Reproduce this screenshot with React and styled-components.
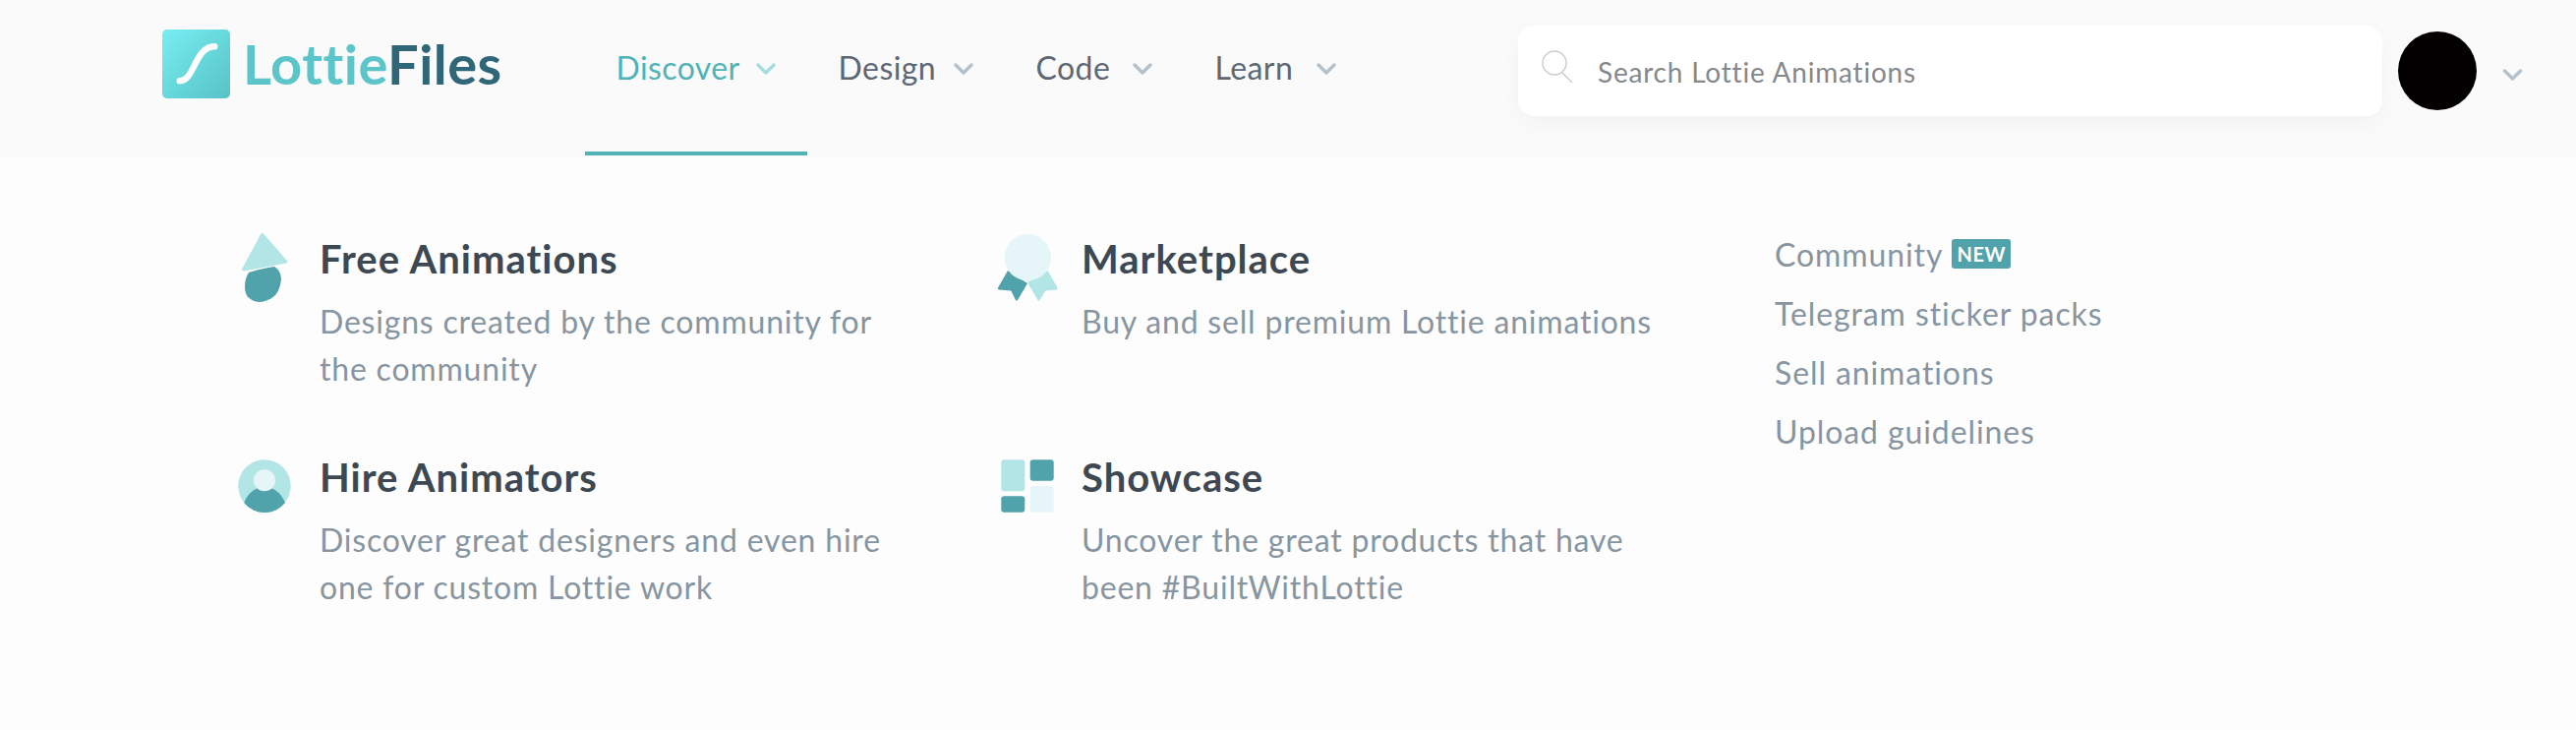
import React from "react";
import styled, { createGlobalStyle } from "styled-components";

const GlobalStyle = createGlobalStyle`
  html, body {
    margin: 0;
    padding: 0;
    background: #fdfdfd;
    overflow: hidden;
  }
`;

const Page = styled.div`
  width: 2620px;
  height: 742px;
  background: #fdfdfd;
  font-family: "Lato", "Open Sans", sans-serif;
`;

// Top bar
const Header = styled.header`
  height: 160px;
  box-sizing: border-box;
  padding: 0 54px 0 165px;
  display: flex;
  align-items: center;
  background: #fafafa;
`;

const Logo = styled.div`
  display: flex;
  align-items: center;
  gap: 13px;
  margin-right: 84px;
  margin-top: -30px;
`;

const LogoMark = styled.svg`
  width: 69px;
  height: 70px;
  display: block;
`;

const LogoText = styled.div`
  font-size: 56px;
  font-weight: 700;
  line-height: 70px;
  letter-spacing: 0.45px;
  color: #5cc5c9;

  span {
    color: #2f6678;
  }
`;

const Nav = styled.nav`
  display: flex;
  height: 100%;
`;

const NavItem = styled.a`
  width: ${(p) => p.$width}px;
  height: 100%;
  box-sizing: border-box;
  padding: 0 32px 24px;
  display: flex;
  align-items: center;
  justify-content: space-between;
  font-size: 32px;
  letter-spacing: 0.4px;
  color: ${(p) => (p.$active ? "#50b3b8" : "#5d6874")};
  position: relative;

  &::after {
    content: "";
    display: ${(p) => (p.$active ? "block" : "none")};
    position: absolute;
    left: 0;
    right: 0;
    bottom: 2px;
    height: 4px;
    background: #54b2b6;
  }
`;

const Chevron = styled.svg`
  width: ${(p) => p.$w || 20}px;
  height: 12px;
  display: block;
  flex: none;
  margin-top: 4px;
  stroke: ${(p) => p.$color || "#b4c0ca"};
  fill: none;
  stroke-width: 3.4;
  stroke-linecap: round;
  stroke-linejoin: round;
`;

const Search = styled.div`
  margin-left: auto;
  width: 879px;
  height: 92px;
  box-sizing: border-box;
  padding: 0 24px;
  display: flex;
  align-items: center;
  gap: 25px;
  background: #fff;
  border-radius: 16px;
  box-shadow: 0 8px 24px rgba(0, 0, 0, 0.035);
  margin-top: -16px;
`;

const SearchIcon = styled.svg`
  width: 32px;
  height: 33px;
  flex: none;
  margin-top: -10px;
  fill: none;
  stroke: #c6ccd2;
  stroke-width: 1.4;
`;

const SearchText = styled.div`
  font-size: 28px;
  letter-spacing: 0.8px;
  color: #85888c;
  margin-top: 1px;
`;

const Avatar = styled.div`
  width: 80px;
  height: 80px;
  margin-left: 16px;
  margin-top: -16px;
  border-radius: 50%;
  background: #020000;
  flex: none;
`;

const AccountChevron = styled.div`
  margin-left: 26px;
  margin-top: -12px;
`;

// Dropdown contents
const Menu = styled.main`
  box-sizing: border-box;
  padding: 70px 0 0 230px;
  display: grid;
  grid-template-columns: 775px 775px auto;
  grid-auto-rows: 222px;
`;

const Feature = styled.div`
  display: flex;
  gap: 15px;
`;

const FeatureIcon = styled.svg`
  width: 80px;
  height: 80px;
  flex: none;
  display: block;
`;

const FeatureBody = styled.div`
  padding-top: 9px;
`;

const FeatureTitle = styled.div`
  font-size: 40px;
  font-weight: 700;
  line-height: 48px;
  letter-spacing: 1px;
  color: #3d4852;
  margin-bottom: 16px;
`;

const FeatureText = styled.div`
  width: 600px;
  font-size: 32px;
  line-height: 48px;
  letter-spacing: 0.8px;
  color: #8795a1;
`;

const Links = styled.div`
  grid-column: 3;
  grid-row: 1 / span 2;
  margin-left: 25px;
  margin-top: -2px;
`;

const LinkRow = styled.div`
  height: 60px;
  display: flex;
  align-items: center;
  gap: 9px;
  font-size: 32px;
  letter-spacing: 0.9px;
  color: #8795a1;
`;

const NewBadge = styled.span`
  width: 60px;
  height: 30px;
  display: flex;
  align-items: center;
  justify-content: center;
  background: #50a3ab;
  border-radius: 3px;
  color: #fff;
  font-size: 20px;
  font-weight: 700;
  letter-spacing: 0.5px;
`;

const LIGHT = "#b2e5e6";
const DARK = "#50a3ab";
const PALE = "#e6f5f7";

const navItems = [
  { label: "Discover", width: 226, active: true },
  { label: "Design", width: 201 },
  { label: "Code", width: 182 },
  { label: "Learn", width: 187 },
];

const DropIcon = () => (
  <FeatureIcon viewBox="0 0 80 80">
    <path
      d="M23 47 C32 44 41 42 49 41 C54 44 56 49 56 54 C55 62 53 67 49 71 C44 75 38 77 33 77 C26 76 21 72 20 68 C18 62 19 53 23 47 Z"
      fill={DARK}
    />
    <path
      d="M35.5 7.5 Q36.7 6 38 7.5 L62 35 Q63 37 61 37.5 L18 45.5 Q15.5 45.5 16.3 43 Z"
      fill={LIGHT}
    />
  </FeatureIcon>
);

const RibbonIcon = () => (
  <FeatureIcon viewBox="0 0 80 80">
    <path d="M20 45 L40 58 L30 75 Q29 76.5 28 75 L23.3 65.5 L11 64.5 Q9.5 64 10 62.5 Z" fill={DARK} />
    <path d="M60.7 45 L70.5 62.5 Q71 64 69.5 64.5 L58.3 65.5 L52.5 75 Q51.5 76.5 50.5 75 L40 57 Z" fill={LIGHT} />
    <circle cx="40.3" cy="31.7" r="23.7" fill={PALE} />
  </FeatureIcon>
);

const PersonIcon = () => (
  <FeatureIcon viewBox="0 0 80 80">
    <circle cx="39" cy="42" r="26.7" fill={LIGHT} />
    <path d="M18.3 59 C22 49 30 43 39 43 C48 43 56 49 60 59 A26.7 26.7 0 0 1 18.3 59 Z" fill={DARK} />
    <circle cx="39" cy="36.3" r="11" fill={PALE} />
  </FeatureIcon>
);

const TilesIcon = () => (
  <FeatureIcon viewBox="0 0 80 80">
    <rect x="13.3" y="15.3" width="24" height="32" rx="3" fill={LIGHT} />
    <rect x="42.7" y="15.3" width="24" height="21.4" rx="3" fill={DARK} />
    <rect x="13.3" y="52.3" width="24" height="16.4" rx="3" fill={DARK} />
    <rect x="42.7" y="42" width="24" height="26.7" rx="3" fill={PALE} />
  </FeatureIcon>
);

const features = [
  {
    title: "Free Animations",
    text: "Designs created by the community for the community",
    Icon: DropIcon,
  },
  {
    title: "Marketplace",
    text: "Buy and sell premium Lottie animations",
    Icon: RibbonIcon,
  },
  {
    title: "Hire Animators",
    text: "Discover great designers and even hire one for custom Lottie work",
    Icon: PersonIcon,
  },
  {
    title: "Showcase",
    text: "Uncover the great products that have been #BuiltWithLottie",
    Icon: TilesIcon,
  },
];

const App = () => {
  return (
    <Page>
      <GlobalStyle />
      <Header>
        <Logo>
          <LogoMark viewBox="0 0 69 70">
            <defs>
              <linearGradient id="logoFill" x1="0" y1="0" x2="1" y2="1">
                <stop offset="0" stopColor="#78eef2" />
                <stop offset="1" stopColor="#56c2c6" />
              </linearGradient>
            </defs>
            <rect width="69" height="70" rx="5" fill="url(#logoFill)" />
            <path
              d="M17.7 52.3 C33 52.3 33 17.3 53.3 17.3"
              fill="none"
              stroke="#fff"
              strokeWidth="6.4"
              strokeLinecap="round"
            />
          </LogoMark>
          <LogoText>
            Lottie<span>Files</span>
          </LogoText>
        </Logo>
        <Nav>
          {navItems.map((item) => (
            <NavItem key={item.label} $width={item.width} $active={item.active}>
              {item.label}
              <Chevron viewBox="0 0 20 12" $color={item.active ? "#a5dcdf" : "#b4c0ca"}>
                <path d="M2 2 L10 10 L18 2" />
              </Chevron>
            </NavItem>
          ))}
        </Nav>
        <Search>
          <SearchIcon viewBox="0 0 32 33">
            <circle cx="13" cy="13" r="12" />
            <path d="M21 23 L31 33" />
          </SearchIcon>
          <SearchText>Search Lottie Animations</SearchText>
        </Search>
        <Avatar />
        <AccountChevron>
          <Chevron viewBox="0 0 20 12" $w={21}>
            <path d="M2 2 L10 10 L18 2" />
          </Chevron>
        </AccountChevron>
      </Header>
      <Menu>
        {features.slice(0, 2).map(({ title, text, Icon }) => (
          <Feature key={title}>
            <Icon />
            <FeatureBody>
              <FeatureTitle>{title}</FeatureTitle>
              <FeatureText>{text}</FeatureText>
            </FeatureBody>
          </Feature>
        ))}
        <Links>
          <LinkRow>
            Community <NewBadge>NEW</NewBadge>
          </LinkRow>
          <LinkRow>Telegram sticker packs</LinkRow>
          <LinkRow>Sell animations</LinkRow>
          <LinkRow>Upload guidelines</LinkRow>
        </Links>
        {features.slice(2).map(({ title, text, Icon }) => (
          <Feature key={title}>
            <Icon />
            <FeatureBody>
              <FeatureTitle>{title}</FeatureTitle>
              <FeatureText>{text}</FeatureText>
            </FeatureBody>
          </Feature>
        ))}
      </Menu>
    </Page>
  );
};

export default App;
